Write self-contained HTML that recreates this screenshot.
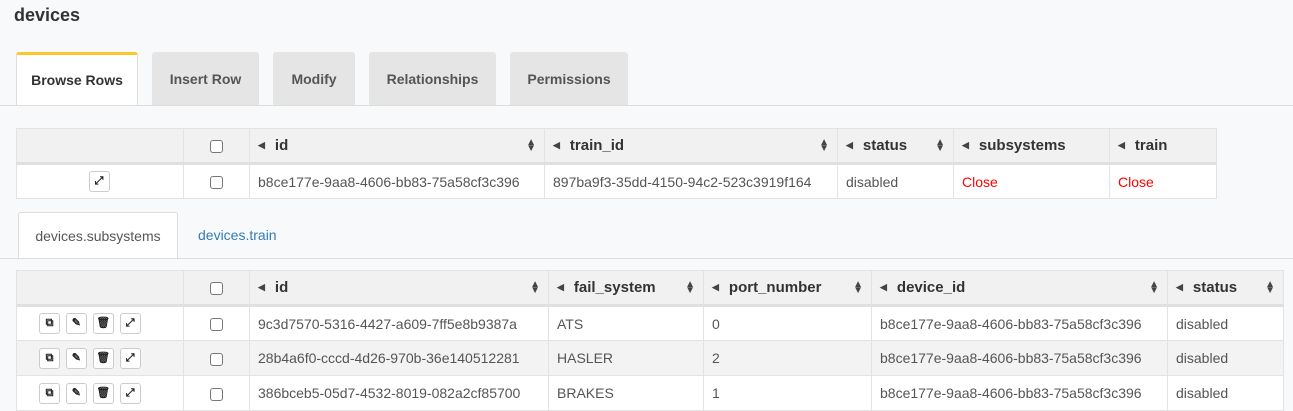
<!DOCTYPE html>
<html><head><style>
*{box-sizing:border-box;margin:0;padding:0}
body{width:1293px;height:411px;overflow:hidden;background:#f8f9fb;font-family:"Liberation Sans",sans-serif;color:#333;position:relative}
.a{position:absolute}
h1{position:absolute;left:14px;top:5px;font-size:18px;font-weight:bold;color:#333}
.tab{position:absolute;top:52px;height:53px;background:#e5e5e5;border-radius:3px 3px 0 0;font-size:14px;font-weight:bold;color:#555;text-align:center;line-height:54px}
.tab.act{background:#fff;color:#333;border-top:3px solid #fcc72c;border-left:1px solid #ddd;border-right:1px solid #ddd;height:54px;line-height:50px}
table{position:absolute;border-collapse:collapse;table-layout:fixed;font-size:14px}
td,th{border:1px solid #e3e3e3;padding:0 8px;white-space:nowrap;overflow:hidden;text-align:left}
th{background:#f1f1f1;font-weight:bold;font-size:15px;height:35px;color:#333;border-bottom:3px solid #e0e0e0;position:relative}
td{background:#fff;color:#555;height:35px}
tr.g td{background:#f3f3f3}
.ar{font-size:9px;color:#444;margin-right:10px;vertical-align:2px}
.so{position:absolute;right:8px;top:11px;font-size:10px;line-height:6px;color:#444}
.cb{display:inline-block;width:13px;height:13px;border:1px solid #777;border-radius:3px;background:#fff;vertical-align:middle}
.btn{display:inline-block;width:21px;height:21px;border:1px solid #ccc;border-radius:3px;background:#fff;margin-right:2px;vertical-align:middle;font-size:11px;text-align:center;line-height:19px;color:#222;font-weight:bold}
.red{color:#f00}
</style></head><body>
<h1>devices</h1>
<div class="tab act" style="left:16px;width:122px">Browse Rows</div>
<div class="tab" style="left:152px;width:107px">Insert Row</div>
<div class="tab" style="left:273px;width:82px">Modify</div>
<div class="tab" style="left:369px;width:127px">Relationships</div>
<div class="tab" style="left:510px;width:118px">Permissions</div>
<div class="a" style="left:0;top:105px;width:1293px;height:1px;background:#ddd"></div>

<table style="left:16px;top:128px;width:1200px">
<colgroup><col style="width:167px"><col style="width:66px"><col style="width:295px"><col style="width:293px"><col style="width:116px"><col style="width:156px"><col style="width:107px"></colgroup>
<tr><th></th><th style="text-align:center"><span class="cb"></span></th><th><span class="ar">◀</span>id<span class="so">▲<br>▼</span></th><th><span class="ar">◀</span>train_id<span class="so">▲<br>▼</span></th><th><span class="ar">◀</span>status<span class="so">▲<br>▼</span></th><th><span class="ar">◀</span>subsystems</th><th><span class="ar">◀</span>train</th></tr>
<tr><td style="text-align:center"><span class="btn">⤢</span></td><td style="text-align:center"><span class="cb"></span></td><td>b8ce177e-9aa8-4606-bb83-75a58cf3c396</td><td>897ba9f3-35dd-4150-94c2-523c3919f164</td><td>disabled</td><td class="red">Close</td><td class="red">Close</td></tr>
</table>

<div class="a" style="left:18px;top:212px;width:160px;height:47px;background:#fff;border:1px solid #ddd;border-bottom:none;border-radius:3px 3px 0 0;font-size:14px;color:#555;text-align:center;line-height:46px">devices.subsystems</div>
<div class="a" style="left:198px;top:212px;font-size:14px;color:#337ab7;line-height:46px">devices.train</div>
<div class="a" style="left:0;top:258px;width:1293px;height:1px;background:#ddd"></div>

<table style="left:16px;top:270px;width:1267px">
<colgroup><col style="width:167px"><col style="width:66px"><col style="width:299px"><col style="width:155px"><col style="width:168px"><col style="width:296px"><col style="width:116px"></colgroup>
<tr><th></th><th style="text-align:center"><span class="cb"></span></th><th><span class="ar">◀</span>id<span class="so">▲<br>▼</span></th><th><span class="ar">◀</span>fail_system<span class="so">▲<br>▼</span></th><th><span class="ar">◀</span>port_number<span class="so">▲<br>▼</span></th><th><span class="ar">◀</span>device_id<span class="so">▲<br>▼</span></th><th><span class="ar">◀</span>status<span class="so">▲<br>▼</span></th></tr>
<tr><td style="padding-left:22px"><span class="btn">⧉</span> <span class="btn">✎</span> <span class="btn">🗑</span> <span class="btn">⤢</span></td><td style="text-align:center"><span class="cb"></span></td><td>9c3d7570-5316-4427-a609-7ff5e8b9387a</td><td>ATS</td><td>0</td><td>b8ce177e-9aa8-4606-bb83-75a58cf3c396</td><td>disabled</td></tr>
<tr class="g"><td style="padding-left:22px"><span class="btn">⧉</span> <span class="btn">✎</span> <span class="btn">🗑</span> <span class="btn">⤢</span></td><td style="text-align:center"><span class="cb"></span></td><td>28b4a6f0-cccd-4d26-970b-36e140512281</td><td>HASLER</td><td>2</td><td>b8ce177e-9aa8-4606-bb83-75a58cf3c396</td><td>disabled</td></tr>
<tr><td style="padding-left:22px"><span class="btn">⧉</span> <span class="btn">✎</span> <span class="btn">🗑</span> <span class="btn">⤢</span></td><td style="text-align:center"><span class="cb"></span></td><td>386bceb5-05d7-4532-8019-082a2cf85700</td><td>BRAKES</td><td>1</td><td>b8ce177e-9aa8-4606-bb83-75a58cf3c396</td><td>disabled</td></tr>
</table>
</body></html>
